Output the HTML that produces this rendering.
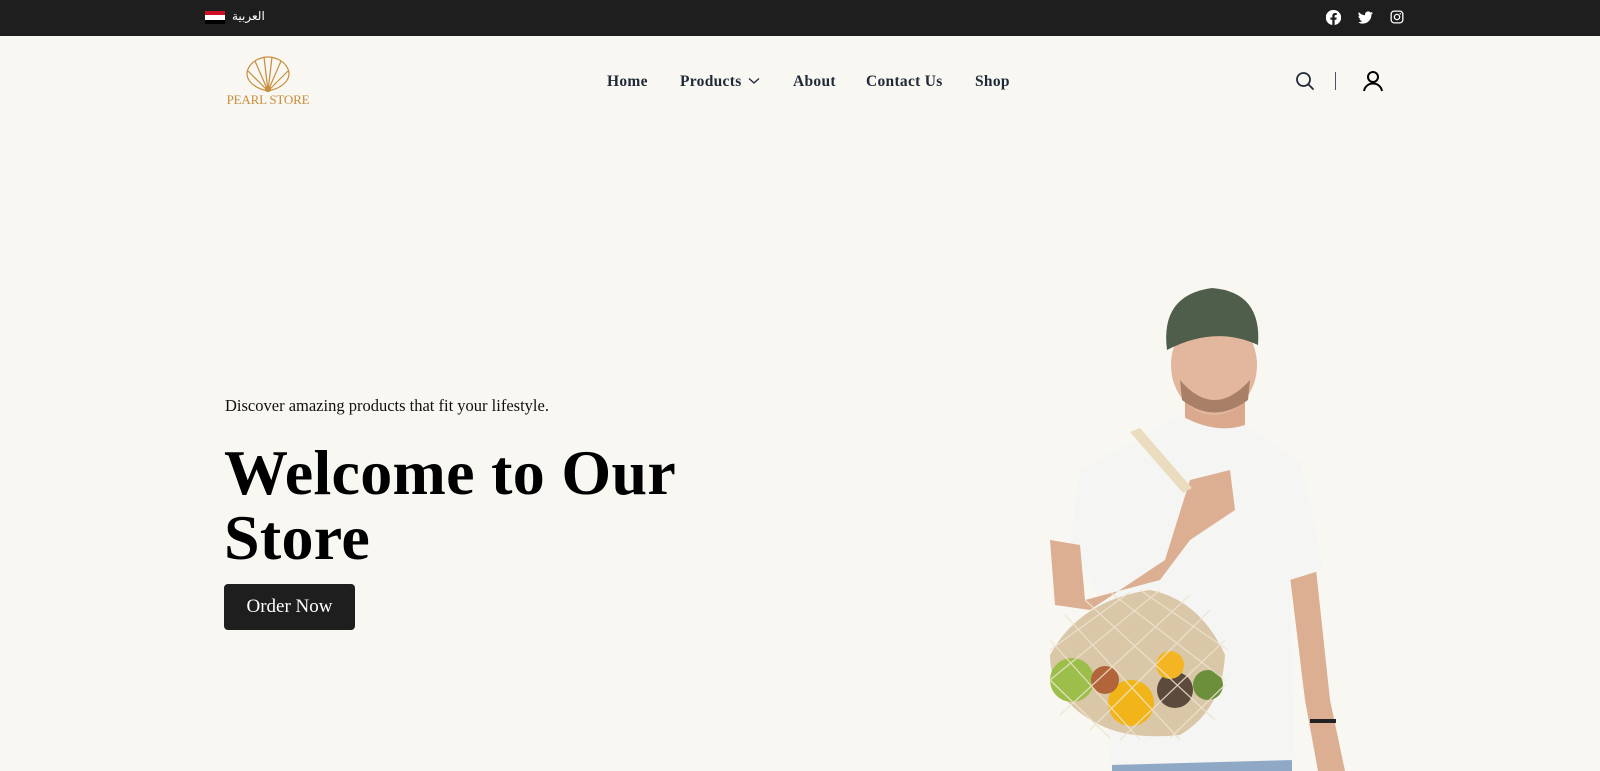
<!DOCTYPE html>
<html><head><meta charset="utf-8">
<style>
*{margin:0;padding:0;box-sizing:border-box}
html,body{width:1600px;height:771px;overflow:hidden;background:#f8f7f2;font-family:"Liberation Serif",serif;position:relative}
.top{position:absolute;left:0;top:0;width:1600px;height:36px;background:#1e1e1e}
.flag{position:absolute;left:205px;top:11px;width:20px;height:13px}
.flag div{height:33.4%}
.ar{position:absolute;left:232px;top:9px;color:#fff;font:12px "DejaVu Sans",sans-serif}
.soc{position:absolute;top:10px}
.nav a{position:absolute;top:73px;font-weight:bold;font-size:15.5px;letter-spacing:0.3px;color:#1f2937;text-decoration:none;white-space:nowrap}
.sub{position:absolute;left:225px;top:396px;font-size:16.5px;color:#111}
h1{position:absolute;left:224px;top:440px;font-size:64px;line-height:65px;font-weight:bold;color:#000;letter-spacing:0.3px}
.btn{position:absolute;left:224px;top:584px;width:131px;height:46px;background:#1e1e1e;border-radius:4px;color:#fff;font-size:19px;text-align:center;line-height:46px}
</style></head><body>
<div class="top">
  <div class="flag"><div style="background:#ce1126"></div><div style="background:#fff"></div><div style="background:#000"></div></div>
  <div class="ar">العربية</div>
  <svg class="soc" style="left:1326px" width="15" height="15" viewBox="0 0 24 24"><path fill="#fff" d="M12 0a12 12 0 0 0-1.9 23.9v-8.4H7.1V12h3V9.4c0-3 1.8-4.7 4.5-4.7 1.3 0 2.7.2 2.7.2v3h-1.5c-1.5 0-2 .9-2 1.9V12h3.3l-.5 3.5h-2.8v8.4A12 12 0 0 0 12 0z"/></svg>
  <svg class="soc" style="left:1358px" width="15" height="15" viewBox="0 0 24 24"><path fill="#fff" d="M23.6 4.6c-.9.4-1.8.6-2.8.8 1-.6 1.8-1.6 2.2-2.7-1 .6-2 1-3.1 1.2a4.9 4.9 0 0 0-8.4 4.5C7.4 8.200 3.8 6.3 1.400 3.300a4.900 4.900 0 0 0 1.500 6.600c-.8 0-1.600-.3-2.200-.6 0 2.400 1.700 4.400 3.900 4.800-.7.200-1.500.200-2.200.100.600 2 2.400 3.400 4.600 3.400A9.900 9.900 0 0 1 0 19.500 13.900 13.900 0 0 0 7.500 21.700c9.100 0 14-7.500 14-14v-.6c1-.7 1.800-1.600 2.400-2.500z"/></svg>
  <svg class="soc" style="left:1390px" width="14" height="14" viewBox="0 0 24 24"><rect x="2" y="2" width="20" height="20" rx="5" fill="none" stroke="#fff" stroke-width="2.2"/><circle cx="12" cy="12" r="4.5" fill="none" stroke="#fff" stroke-width="2.2"/><circle cx="17.6" cy="6.4" r="1.3" fill="#fff"/></svg>
</div>

<svg style="position:absolute;left:225px;top:56px" width="88" height="50" viewBox="0 0 88 50">
  <g fill="none" stroke="#c98d3c" stroke-width="1.2">
    <path d="M43 35 C28 32 19 23 23 13 C27 4 37 1 43 1 C49 1 59 4 63 13 C67 23 58 32 43 35Z"/>
    <path d="M43 35 L23 15 M43 35 L30 5 M43 35 L39 1 M43 35 L47 1 M43 35 L56 5 M43 35 L63 15"/>
    <circle cx="43" cy="33" r="2.5" fill="#c98d3c"/>
  </g>
  <text x="43" y="48" text-anchor="middle" font-family="Liberation Serif,serif" font-size="13" fill="#c98d3c" letter-spacing="-0.2">PEARL STORE</text>
</svg>

<div class="nav">
  <a style="left:607px">Home</a>
  <a style="left:680px">Products <svg width="12" height="8" viewBox="0 0 12 8" style="margin-left:2px;vertical-align:1px"><path d="M1 1.5l5 4.5 5-4.5" fill="none" stroke="#1f2937" stroke-width="1.3"/></svg></a>
  <a style="left:793px">About</a>
  <a style="left:866px">Contact Us</a>
  <a style="left:975px">Shop</a>
</div>
<svg style="position:absolute;left:1295px;top:71px" width="20" height="20" viewBox="0 0 20 20"><circle cx="8.5" cy="8.5" r="6.5" fill="none" stroke="#1f2937" stroke-width="1.8"/><path d="M13.3 13.3L18 18" stroke="#1f2937" stroke-width="1.8" stroke-linecap="round"/></svg>
<div style="position:absolute;left:1335px;top:72px;width:1px;height:18px;background:#4b5563"></div>
<svg style="position:absolute;left:1362px;top:70px" width="22" height="22" viewBox="0 0 22 22"><circle cx="11" cy="7" r="5" fill="none" stroke="#000" stroke-width="2"/><path d="M2 21c1-5 5-7.500 9-7.500s8 2.500 9 7.500" fill="none" stroke="#000" stroke-width="2"/></svg>

<div class="sub">Discover amazing products that fit your lifestyle.</div>
<h1>Welcome to Our<br>Store</h1>
<div class="btn">Order Now</div>

<svg style="position:absolute;left:0;top:0" width="1600" height="771" viewBox="0 0 1600 771">
  <rect x="1112" y="735" width="180" height="40" fill="#8ea8c6"/>
  <path d="M1288 560 L1315 560 L1330 700 L1345 771 L1318 771 L1305 700 Z" fill="#dcae92"/>
  <rect x="1310" y="719" width="26" height="4" fill="#222"/>
  <rect x="1185" y="395" width="60" height="40" fill="#dba98e"/>
  <path d="M1180 415 Q1215 435 1245 425 L1300 462 Q1320 540 1322 570 L1290 580 L1295 760 L1110 765 L1100 600 L1070 540 L1080 470 Z" fill="#f5f5f4"/>
  <path d="M1050 540 L1080 545 L1085 600 L1160 580 L1190 540 L1235 510 L1230 470 L1190 480 L1165 560 L1090 610 L1055 605 Z" fill="#dcae92"/>
  <path d="M1130 432 L1140 428 L1192 488 L1183 493 Z" fill="#ecdcbf"/>
  <ellipse cx="1214" cy="365" rx="43" ry="50" fill="#e2b79d"/>
  <path d="M1180 380 Q1214 420 1250 380 L1248 400 Q1214 425 1182 400Z" fill="#a88068"/>
  <path d="M1167 350 Q1160 295 1212 288 Q1262 292 1258 345 Q1215 325 1167 350Z" fill="#4f5e4a"/>
  <path d="M1050 655 Q1080 600 1150 590 Q1200 600 1225 655 Q1222 710 1180 735 Q1130 740 1100 725 Q1050 700 1050 655Z" fill="#d9c7a8"/>
  <circle cx="1072" cy="680" r="22" fill="#9bbf4a"/>
  <circle cx="1131" cy="703" r="23" fill="#f1b51a"/>
  <circle cx="1175" cy="690" r="18" fill="#5c4a3c"/>
  <circle cx="1208" cy="685" r="15" fill="#6b8f3a"/>
  <circle cx="1170" cy="665" r="14" fill="#f3b622"/>
  <circle cx="1105" cy="680" r="14" fill="#b2653a"/>
  <g stroke="#efe4cf" stroke-width="1.3" opacity="0.85">
    <path d="M1050 640 L1140 740 M1065 615 L1180 740 M1085 600 L1215 720 M1110 592 L1225 680 M1050 680 L1110 738 M1140 590 L1228 650"/>
    <path d="M1225 640 L1120 740 M1210 610 L1090 730 M1190 595 L1060 715 M1160 590 L1050 680 M1225 685 L1170 738 M1130 592 L1050 650"/>
  </g>
</svg>
</body></html>
